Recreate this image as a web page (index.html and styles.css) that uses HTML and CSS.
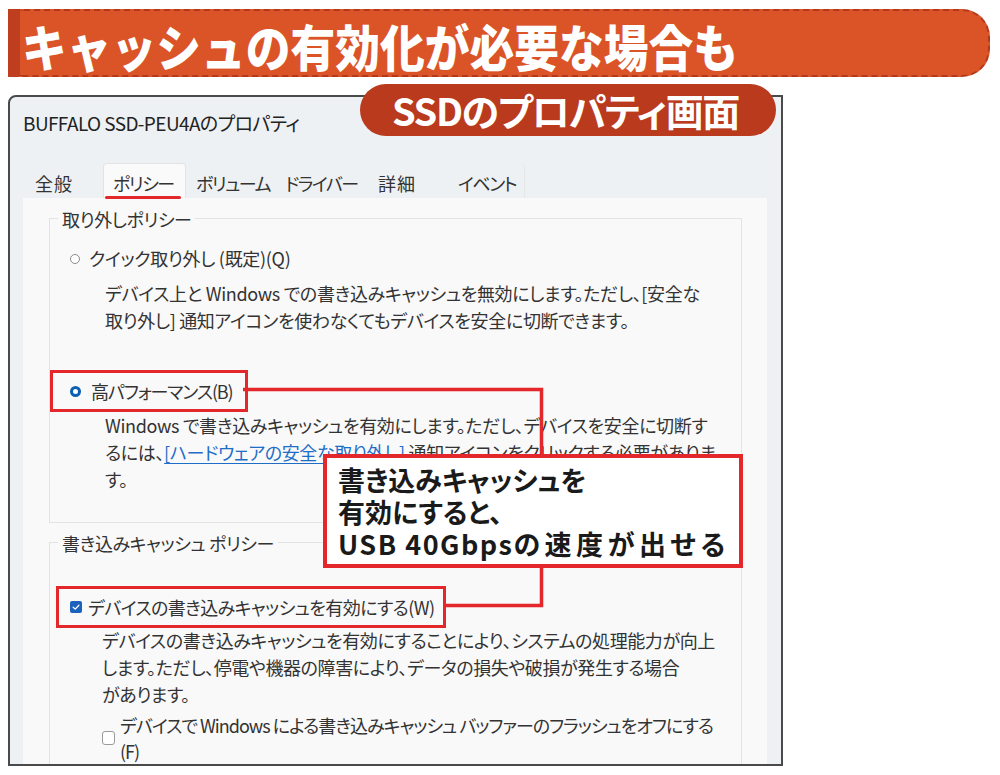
FILE: index.html
```html
<!DOCTYPE html>
<html lang="ja">
<head>
<meta charset="utf-8">
<title>SSDのプロパティ画面</title>
<link rel="stylesheet" href="styles.css">
</head>
<body>
<div class="banner"><span class="banner-title">キャッシュの有効化が必要な場合も</span></div>

<div class="window">
  <div class="title">BUFFALO SSD-PEU4Aのプロパティ</div>
  <div class="tabs">
    <div class="tab tab-1">全般</div>
    <div class="tab tab-2 active">ポリシー</div>
    <div class="tab tab-3">ボリューム</div>
    <div class="tab tab-4">ドライバー</div>
    <div class="tab tab-5">詳細</div>
    <div class="tab tab-6">イベント</div>
  </div>
  <div class="panel">
    <div class="group group-removal">
      <div class="group-label">取り外しポリシー</div>
      <div class="option option-quick">
        <span class="radio"></span>
        <span class="option-text">クイック取り外し (既定)(Q)</span>
      </div>
      <p class="desc desc-quick">デバイス上と Windows での書き込みキャッシュを無効にします。ただし、[安全な<br>取り外し] 通知アイコンを使わなくてもデバイスを安全に切断できます。</p>
      <div class="option option-boxed option-perf">
        <span class="radio radio-on"></span>
        <span class="option-text">高パフォーマンス(B)</span>
      </div>
      <p class="desc desc-perf">Windows で書き込みキャッシュを有効にします。ただし、デバイスを安全に切断す<br>るには、<span class="link">[ハードウェアの安全な取り外し]</span> 通知アイコンをクリックする必要がありま<br>す。</p>
    </div>

    <div class="group group-cache">
      <div class="group-label">書き込みキャッシュ ポリシー</div>
      <div class="option option-boxed option-cache">
        <span class="check check-on"><svg viewBox="0 0 12 12" width="12" height="12"><path d="M3.2 6.2 L5.2 8.1 L8.9 4.2" fill="none" stroke="#fff" stroke-width="1.3" stroke-linecap="round" stroke-linejoin="round"/></svg></span>
        <span class="option-text">デバイスの書き込みキャッシュを有効にする(W)</span>
      </div>
      <p class="desc desc-cache">デバイスの書き込みキャッシュを有効にすることにより、システムの処理能力が向上<br>します。ただし、停電や機器の障害により、データの損失や破損が発生する場合<br>があります。</p>
      <div class="option option-flush">
        <span class="check"></span>
        <span class="option-text option-multiline">デバイスで Windows による書き込みキャッシュ バッファーのフラッシュをオフにする<br>(F)</span>
      </div>
    </div>
  </div>
</div>

<div class="pill">SSDのプロパティ画面</div>

<svg class="connectors" width="1000" height="775" viewBox="0 0 1000 775">
  <polyline points="243,389.5 541.5,389.5 541.5,456" fill="none" stroke="#E3272B" stroke-width="3.5"/>
  <polyline points="541.5,566 541.5,605.5 446,605.5" fill="none" stroke="#E3272B" stroke-width="3.5"/>
</svg>

<div class="callout">書き込みキャッシュを<br>有効にすると、<br><span class="callout-latin">USB 40Gbps</span><span class="callout-wide">の速度が出せる</span></div>
</body>
</html>
```

FILE: styles.css
```css
html, body {
  margin: 0;
  padding: 0;
}

body {
  width: 1000px;
  height: 775px;
  background: #ffffff;
  position: relative;
  overflow: hidden;
  font-family: "Noto Sans CJK JP", "Noto Sans", sans-serif;
  font-feature-settings: "palt";
}

/* ---------- top banner ---------- */
.banner {
  box-sizing: border-box;
  margin: 9px 10px 0 8px;
  height: 68px;
  background: #DB5427;
  border: 2px dashed #B3381C;
  border-left: 12px solid #BF3E1F;
  border-radius: 0 28px 28px 0;
  display: flex;
  align-items: center;
  padding: 4px 0 0 2px;
}

.banner-title {
  display: inline-block;
  color: #ffffff;
  font-size: 50px;
  font-weight: 900;
  line-height: 1;
  white-space: nowrap;
  transform: scaleX(0.895);
  transform-origin: left center;
  font-feature-settings: normal;
}

/* ---------- dialog window ---------- */
.window {
  box-sizing: border-box;
  margin: 18px 0 0 8px;
  width: 775px;
  height: 671px;
  border: 2px solid #4a4a4a;
  border-radius: 8px 0 0 0;
  background: #EEF1F4;
  overflow: hidden;
  color: #333333;
}

.title {
  padding: 13px 0 0 13px;
  font-size: 19px;
  line-height: 26px;
  letter-spacing: -0.6px;
  color: #222222;
  white-space: nowrap;
}

.tabs {
  display: flex;
  margin: 27px 0 0 15px;
  height: 35px;
}

.tab {
  box-sizing: border-box;
  padding: 5px 0 0 10px;
  font-size: 18px;
  line-height: 30px;
  letter-spacing: -1.5px;
  color: #333333;
  white-space: nowrap;
}

.tab-1 { width: 78px; letter-spacing: 1px; }
.tab-2 { width: 83px; }
.tab-3 { width: 89px; }
.tab-4 { width: 93px; }
.tab-5 { width: 80px; letter-spacing: 1px; }
.tab-6 {
  width: 77px;
  border-right: 1px solid #E4E6E8;
  border-radius: 0 5px 0 0;
}

.tab.active {
  position: relative;
  background: #FAFAFA;
  border: 1px solid #E2E3E5;
  border-bottom: none;
  border-radius: 4px 4px 0 0;
  padding: 4px 0 0 9px;
}

.tab.active::after {
  content: "";
  position: absolute;
  left: 1px;
  bottom: -1px;
  width: 76px;
  height: 3px;
  border-radius: 2px;
  background: #E3272B;
}

.panel {
  margin: 0 14px 0 13px;
  height: 600px;
  background: #F9F9F9;
  padding: 20px 25px 0 26px;
  box-sizing: border-box;
}

/* ---------- group boxes ---------- */
.group {
  border: 1px solid #E1E3E5;
  padding: 0 0 29px 20px;
}

.group-cache {
  margin-top: 19px;
  padding-bottom: 60px;
}

.group-label {
  display: table;
  margin: -13px 0 0 -12px;
  padding: 0 4px;
  background: #F9F9F9;
  font-size: 18px;
  line-height: 26px;
  letter-spacing: -0.4px;
  color: #333333;
  white-space: nowrap;
}

.option {
  display: flex;
  align-items: center;
  font-size: 18px;
  line-height: 27px;
  letter-spacing: -0.6px;
  white-space: nowrap;
}

.option-quick {
  margin-top: 13px;
  gap: 9px;
  letter-spacing: -0.3px;
}

.option-boxed {
  box-sizing: border-box;
  width: fit-content;
  height: 42px;
  border: 3px solid #E3272B;
}

.option-perf {
  margin: 36px 0 0 -20px;
  padding: 0 12px 0 17px;
  gap: 10px;
  letter-spacing: -1.1px;
}

.option-cache {
  margin: 30px 0 0 -14px;
  padding: 0 9px 0 11px;
  gap: 6px;
}

.option-flush {
  margin-top: 4px;
  padding-left: 32px;
  gap: 5px;
  line-height: 26px;
  letter-spacing: -1px;
}

.desc {
  margin: 0;
  font-size: 18px;
  line-height: 27px;
  letter-spacing: -0.35px;
  white-space: nowrap;
  color: #333333;
}

.desc-quick {
  margin-top: 8px;
  padding-left: 35px;
}

.desc-perf {
  padding-left: 35px;
}

.desc-cache {
  margin-top: -1px;
  padding-left: 32px;
  letter-spacing: -0.4px;
}

.link {
  color: #1E6EC8;
  text-decoration: underline;
  text-underline-offset: 3px;
}

/* ---------- controls ---------- */
.radio {
  box-sizing: border-box;
  width: 10px;
  height: 10px;
  border: 1px solid #8C8C8C;
  border-radius: 50%;
  background: #ffffff;
  flex: none;
}

.radio-on {
  width: 11px;
  height: 11px;
  border: 3.5px solid #0B5FB5;
}

.check {
  box-sizing: border-box;
  width: 13px;
  height: 14px;
  border: 1px solid #9A9A9A;
  border-radius: 3px;
  background: #ffffff;
  flex: none;
}

.check-on {
  width: 12px;
  height: 12px;
  border: none;
  border-radius: 2px;
  background: #1A62BC;
  display: flex;
}

/* ---------- annotations ---------- */
.pill {
  position: absolute;
  left: 360px;
  top: 84px;
  width: 416px;
  height: 52px;
  box-sizing: border-box;
  border-radius: 26px;
  background: #BA3A1E;
  color: #ffffff;
  font-size: 38px;
  font-weight: 700;
  line-height: 52px;
  letter-spacing: -1.4px;
  padding-left: 32px;
  white-space: nowrap;
}

.connectors {
  position: absolute;
  left: 0;
  top: 0;
  pointer-events: none;
}

.callout {
  position: absolute;
  left: 323px;
  top: 454px;
  width: 420px;
  height: 114px;
  box-sizing: border-box;
  border: 4px solid #E3272B;
  background: #ffffff;
  padding: 6px 0 0 11px;
  font-size: 27px;
  font-weight: 700;
  line-height: 32px;
  color: #1A1A1A;
  white-space: nowrap;
}

.callout-latin {
  letter-spacing: 1.5px;
}

.callout-wide {
  letter-spacing: 4.5px;
}
```
